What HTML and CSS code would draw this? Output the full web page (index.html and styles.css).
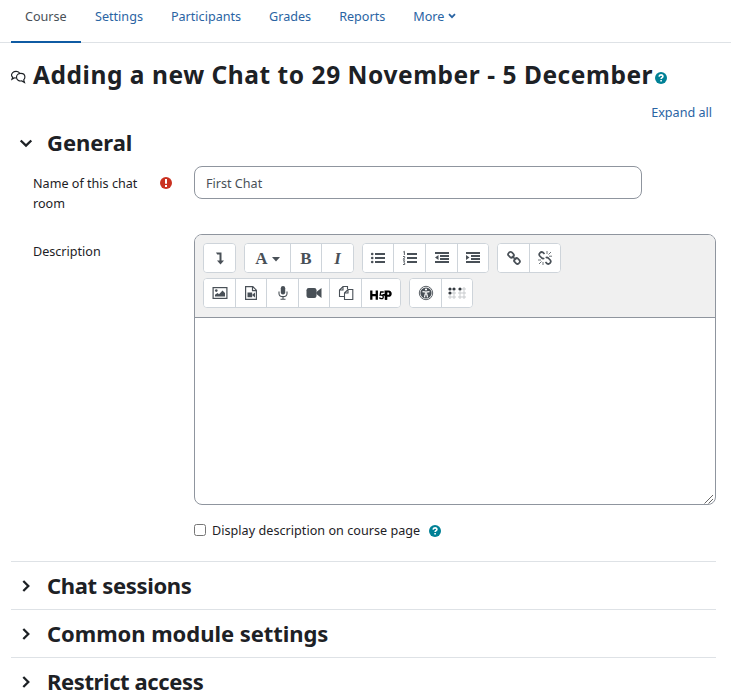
FILE: index.html
```html
<!DOCTYPE html>
<html lang="en">
<head>
<meta charset="utf-8">
<title>Adding a new Chat</title>
<link rel="stylesheet" href="styles.css">
</head>
<body>
<nav class="tabs">
  <a class="tab active"><span>Course</span></a>
  <a class="tab"><span>Settings</span></a>
  <a class="tab"><span>Participants</span></a>
  <a class="tab"><span>Grades</span></a>
  <a class="tab"><span>Reports</span></a>
  <a class="tab more"><span>More</span><svg width="8" height="6" viewBox="0 0 8 6"><path d="M1 1.200 4 4.200 7 1.200" fill="none" stroke="currentColor" stroke-width="1.800"/></svg></a>
</nav>
<main>
  <h2 class="title">
    <svg class="chat" width="15" height="14" viewBox="0 0 15 14" fill="none" stroke="#1d2125" stroke-width="1.150"><path d="M5.300 7.800C4.700 8 4 8 3.200 7.900L1 9.200 1.700 7.300C.2 6.100.1 4.200 1.700 2.600 3.500 1 6.700.9 8.600 2.800"/><path d="M9.800 3.400c2.400 0 4.100 1.700 4.100 3.700 0 1.100-.5 2.100-1.200 2.800l.8 2.600-2.700-1.600c-2.900.6-5.300-1.200-5.300-3.700 0-2.100 1.900-3.800 4.300-3.800z"/></svg>
    <span class="title-text">Adding a new Chat to 29 November - 5 December</span>
    <svg class="help" width="12" height="12" viewBox="0 0 12 12"><circle cx="6" cy="6" r="6" fill="#008196"/><path d="M4.100 4.600C4.200 2.300 7.900 2.400 7.900 4.400 7.900 5.700 6.100 5.700 6.100 7.100M6.100 8.100v1.500" fill="none" stroke="#fff" stroke-width="1.600"/></svg>
  </h2>
  <div class="expand"><a>Expand all</a></div>
  <section class="general">
    <h3 class="heading open"><svg width="14" height="14" viewBox="0 0 14 14"><path d="M1.700 4.500 7 9.600 12.300 4.500" fill="none" stroke="#1d2125" stroke-width="2.300"/></svg><span>General</span></h3>
    <div class="row name-row">
      <label class="label">Name of this chat room</label>
      <svg class="required" width="12" height="12" viewBox="0 0 12 12"><circle cx="6" cy="6" r="6" fill="#ca3120"/><path d="M6 2v4.800M6 8v2" stroke="#fff" stroke-width="2"/></svg>
      <input class="field" type="text" value="First Chat">
    </div>
    <div class="row desc-row">
      <label class="label">Description</label>
      <div class="editor">
        <div class="toolbar">
          <div class="tools">
            <div class="group"><button class="b31"><svg viewBox="0 0 16 16"><path d="M4 2.500h5.500v8H12l-3.500 4L5 10.500h2.500v-6H5.200z"/></svg></button></div>
            <div class="group"><button class="b45 serif">A<svg class="caret" viewBox="0 0 8 5"><path d="M0 0h8L4 4.500z"/></svg></button><button class="b31 serif">B</button><button class="b32 serif italic">I</button></div>
            <div class="group">
              <button class="b30"><svg viewBox="0 0 16 16"><path d="M5 3h10v2H5zM5 7h10v2H5zM5 11h10v2H5z"/><circle cx="2.200" cy="4" r="1.300"/><circle cx="2.200" cy="8" r="1.300"/><circle cx="2.200" cy="12" r="1.300"/></svg></button>
              <button class="b32"><svg viewBox="0 0 16 16"><path d="M5 3h10v2H5zM5 7h10v2H5zM5 11h10v2H5z"/><path d="M1.300 2 2.400 1.300V5M1 6.500h1.600v1.200L1.200 9.200H3M1 10.800h1.700l-.8 1.400.8.8v1.500H1" fill="none" stroke="#495057" stroke-width=".9"/></svg></button>
              <button class="b32"><svg viewBox="0 0 16 16"><path d="M1 2h14v2H1zM6 5h9v2H6zM6 8h9v2H6zM1 11h14v2H1zM4.500 5v5L1 7.500z"/></svg></button>
              <button class="b31"><svg viewBox="0 0 16 16"><path d="M1 2h14v2H1zM6 5h9v2H6zM6 8h9v2H6zM1 11h14v2H1zM1 5v5l3.500-2.500z"/></svg></button>
            </div>
            <div class="group">
              <button class="b31"><svg viewBox="0 0 16 16"><g fill="none" stroke="#495057" stroke-width="1.700"><rect x="-2.900" y="-2.300" width="5.800" height="4.600" rx="1.900" transform="translate(5 4.800) rotate(45)"/><rect x="-2.900" y="-2.300" width="5.800" height="4.600" rx="1.900" transform="translate(11 11) rotate(45)"/><path d="m6 6 4 4"/></g></svg></button>
              <button class="b31"><svg viewBox="0 0 16 16"><g fill="none" stroke="#495057" stroke-width="1.700"><path d="M7.500 4 6 2.500C4 1 1 3.800 2.800 6l2 2c.8.7 1.700.6 2.500.2M8.500 12l1.500 1.500c2 1.500 5-1.300 3.200-3.500l-2-2c-.8-.7-1.700-.6-2.500-.2"/><path d="M10 1v3M11.500 4.500 14 2M12 6.200h3M1 10h3M2 14l2.500-2.500M6 12v3" stroke-width=".8"/></g></svg></button>
            </div>
          </div>
          <div class="tools">
            <div class="group">
              <button class="b31"><svg viewBox="0 0 16 16"><rect x="1.100" y="2.600" width="13.800" height="10.800" fill="none" stroke="#495057" stroke-width="1.200"/><circle cx="4.300" cy="5.600" r="1.300"/><path d="M3 11.500V9.800L5.500 8 7 9.200l3.500-3.700L13 8v3.500z"/></svg></button>
              <button class="b31"><svg viewBox="0 0 16 16"><path d="M2.600 1.600h7.200l3.600 3.600v9.200H2.600zM9.500 1.600v4h4" fill="none" stroke="#495057" stroke-width="1.200"/><path d="M4.500 7.500h4.700v4.700H4.500zM9.500 9.500l2.500-2v5l-2.500-2z"/></svg></button>
              <button class="b32"><svg viewBox="0 0 16 16"><rect x="5.800" y="1" width="4.400" height="8.500" rx="2.200"/><path d="M4 6.500v2c0 4.200 8 4.200 8 0v-2M8 11.700v2.500M5.500 14.300h5" fill="none" stroke="#495057" stroke-width="1.100"/></svg></button>
              <button class="b31"><svg viewBox="0 0 16 16"><rect x=".5" y="3" width="10" height="10" rx="2.200"/><path d="m10.300 7 5.200-4v10l-5.200-4z"/></svg></button>
              <button class="b32"><svg viewBox="0 0 16 16"><path d="M6 11.500H1.500V5L5 1.500h4.500V4M5 1.500V5H1.500M6.500 8 10 4.500h4.800v10H6.500zM10 4.500V8H6.500" fill="none" stroke="#495057" stroke-width="1.100"/></svg></button>
              <button class="b39"><svg class="h5p" viewBox="0 0 22 12"><path d="M1.300 1.500v9.300M6.800 1.500v9.300M1.300 6.100h5.500" fill="none" stroke="#000" stroke-width="2.300"/><path d="M13.700 3h-3l-.5 3.200c3.600-.8 4.100 3.500 1.200 3.500-1 0-1.700-.4-2-1.200" fill="none" stroke="#000" stroke-width="1.300"/><path d="M12.500 5.800H16v5" fill="none" stroke="#000" stroke-width="1.800"/><path d="M14.500 1.500h4c4.300 0 4.300 6.300 0 6.300h-1.200v3h-2.500zM17.300 3.500v2.300h1c1.300 0 1.300-2.300 0-2.300z" fill="#000" fill-rule="evenodd"/></svg></button>
            </div>
            <div class="group">
              <button class="b31"><svg viewBox="0 0 16 16"><circle cx="8" cy="8" r="6.700" fill="none" stroke="#495057" stroke-width=".9"/><circle cx="8" cy="8" r="5.600"/><circle cx="8" cy="4.500" r="1.100" fill="#fff"/><path d="M4.500 6.700 8 7.100l3.500-.4M8 7v2.500M7.300 8.500l-.8 3.800M8.700 8.500l.8 3.800" stroke="#fff" stroke-width="1.200"/></svg></button>
              <button class="b31"><svg class="braille" viewBox="0 0 18 12"><g fill="#343a40"><circle cx="2" cy="2" r="1.600"/><circle cx="6" cy="2" r="1.600"/><circle cx="12" cy="2" r="1.600"/><circle cx="2" cy="6" r="1.600"/></g><g fill="none" stroke="#adb1b5" stroke-width=".7"><circle cx="16" cy="2" r="1.200"/><circle cx="6" cy="6" r="1.200"/><circle cx="12" cy="6" r="1.200"/><circle cx="16" cy="6" r="1.200"/><circle cx="2" cy="10" r="1.200"/><circle cx="6" cy="10" r="1.200"/><circle cx="12" cy="10" r="1.200"/><circle cx="16" cy="10" r="1.200"/></g></svg></button>
            </div>
          </div>
        </div>
        <div class="canvas"><svg width="10" height="10" viewBox="0 0 10 10"><path d="M.5 9.500 9 1M4.500 9.500 9 5" stroke="#555" fill="none" stroke-width=".9"/></svg></div>
      </div>
    </div>
    <div class="check"><input type="checkbox"><span>Display description on course page</span><svg width="12" height="12" viewBox="0 0 12 12"><circle cx="6" cy="6" r="6" fill="#008196"/><path d="M4.100 4.600C4.200 2.300 7.900 2.400 7.900 4.400 7.900 5.700 6.100 5.700 6.100 7.100M6.100 8.100v1.500" fill="none" stroke="#fff" stroke-width="1.600"/></svg></div>
  </section>
  <h3 class="heading closed chat-sessions"><svg width="14" height="14" viewBox="0 0 14 14"><path d="M4.300 2 9.300 7 4.300 12" fill="none" stroke="#1d2125" stroke-width="2.300"/></svg><span>Chat sessions</span></h3>
  <h3 class="heading closed"><svg width="14" height="14" viewBox="0 0 14 14"><path d="M4.300 2 9.300 7 4.300 12" fill="none" stroke="#1d2125" stroke-width="2.300"/></svg><span>Common module settings</span></h3>
  <h3 class="heading closed restrict"><svg width="14" height="14" viewBox="0 0 14 14"><path d="M4.300 2 9.300 7 4.300 12" fill="none" stroke="#1d2125" stroke-width="2.300"/></svg><span>Restrict access</span></h3>
</main>
</body>
</html>
```
FILE: styles.css
```css
* { box-sizing: border-box; }
body { margin: 0; height: 699px; overflow: hidden; background: #fff; color: #1d2125; font: 12.6px/20px "Noto Sans", "Open Sans", sans-serif; }
h2, h3 { margin: 0; font-weight: 700; }
.tabs { display: flex; height: 43px; padding-left: 11px; border-bottom: 1px solid #dee2e6; }
.tab { height: 43px; padding: 7px 14px 0; color: #2a64a3; white-space: nowrap; }
.tab.active { width: 70px; color: #495057; border-bottom: 2px solid #0f5ba3; }
.more svg { margin-left: 4px; vertical-align: 2px; }
main { padding: 0 15px 0 11px; }
.title { display: flex; align-items: center; height: 64px; font-size: 24.500px; line-height: 32px; letter-spacing: .545px; white-space: nowrap; }
.chat { margin-right: 7px; margin-top: 4px; }
.title-text { width: 620px; }
.help { margin: 6px 0 0 2px; flex: none; }
.expand { height: 20px; margin-top: -4px; padding-right: 4px; text-align: right; color: #2a64a3; }
.heading { display: flex; align-items: center; font-size: 22px; line-height: 28px; letter-spacing: -.05px; white-space: nowrap; }
.heading svg { margin: 0 14px 0 8px; }
.heading span { margin-top: -2px; }
.open { height: 40px; }
.chat-sessions { letter-spacing: -.33px; }
.restrict { letter-spacing: -.4px; }
.row { display: flex; padding-left: 22px; }
.name-row { margin-top: 3px; height: 68px; }
.label { width: 126px; padding-right: 10px; margin-top: 8px; }
.name-row .label { width: 127px; }
.required { margin: 11px 22px 0 0; }
.field { width: 448px; height: 33px; padding: 2px 11px 0; border: 1px solid #8f959e; border-radius: 8px; color: #495057; font: inherit; }
.desc-row .label { width: 161px; }
.editor { width: 522px; height: 271px; border: 1px solid #8f959e; border-radius: 8px; overflow: hidden; }
.toolbar { height: 83px; padding: 8px; background: #f0f0f0; border-bottom: 1px solid #8f959e; }
.tools { display: flex; gap: 8px; margin-bottom: 5px; }
.group { display: flex; height: 30px; border: 1px solid #ced4da; border-radius: 4px; background: #fff; overflow: hidden; }
button { display: flex; align-items: center; justify-content: center; height: 28px; padding: 0; border: 0; border-left: 1px solid #ced4da; background: #fff; color: #495057; fill: #495057; }
button:first-child { border-left: 0; }
button svg { width: 16px; height: 16px; }
.b30 { width: 30px; }
.b31 { width: 31px; }
.b32 { width: 32px; }
.b39 { width: 39px; }
.b45 { width: 45px; }
.serif { font: 700 17px/20px "Liberation Serif", serif; padding-top: 2px; }
.italic { font-style: italic; }
button .caret { width: 8px; height: 5px; margin-left: 4px; }
button .h5p { width: 22px; height: 12px; margin-top: 4px; }
button .braille { width: 18px; height: 12px; }
.canvas { display: flex; height: 187px; align-items: flex-end; justify-content: flex-end; padding: 0 1px 1px; }
.check { display: flex; align-items: center; height: 56px; padding: 0 0 4px 183px; letter-spacing: .03px; }
.check input { width: 12px; height: 12px; margin: 0 6px 2px 0; }
.check svg { margin-left: 9px; }
.closed { height: 48px; padding-top: 1px; border-top: 1px solid #dee2e6; }
```
